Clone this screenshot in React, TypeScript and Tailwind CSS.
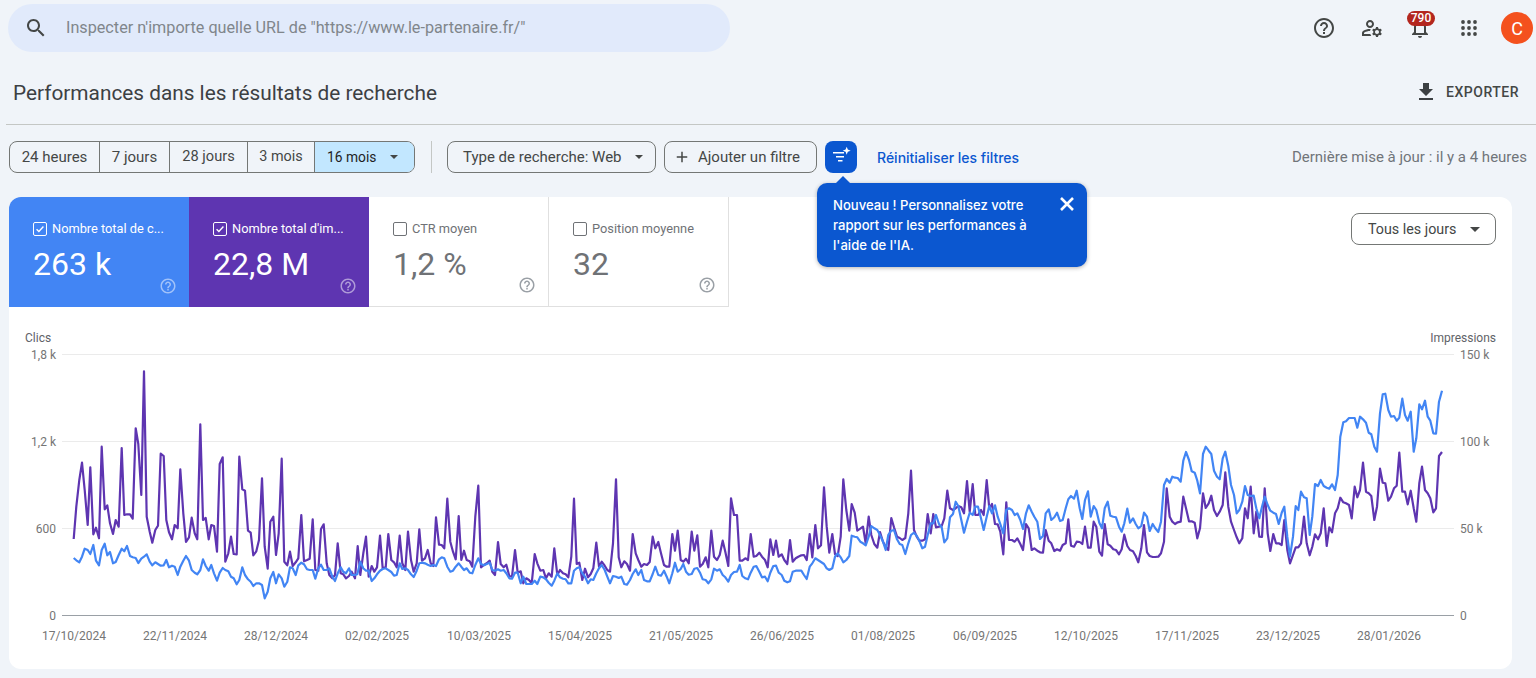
import React from "react";

// chart points read off the picture: [left of crop, top of crop, x, y, x, y...] in 3x crop pixels
const toPoints = (parts: number[][]) =>
  parts
    .map(([ox, oy, ...rest]) => {
      const out: string[] = [];
      for (let i = 0; i < rest.length; i += 2) {
        out.push(`${(ox + rest[i] / 3).toFixed(1)},${(oy + rest[i + 1] / 3).toFixed(1)}`);
      }
      return out.join(" ");
    })
    .join(" ");

const purple = toPoints([
  [0, 330, 221,627,229,530,238,450,246,398,254,480,263,585,271,412,280,613,288,593,297,625,305,350,314,538,322,526,330,580,339,612,347,570,356,590,365,354,373,555,381,553,390,553,398,566,407,295,415,342,424,495,432,124,440,560,449,605,457,638,466,600,474,587,482,371,491,378,499,570,507,607,516,628,524,585,533,595,541,418,550,550,558,636,567,622,575,563,584,610,592,628,601,283,609,570,617,564,626,628,634,585,642,588,651,665,659,402,668,382,676,695,685,670,693,620,701,672,710,673,718,380,727,478,735,482,744,602,752,608,760,676,769,664,777,630,786,445,794,650,803,716,811,575,820,560,828,675,836,610,845,386,853,695,862,706,870,665,878,708,887,697,895,685,904,555,912,694,921,690,929,686,938,568,946,720,955,722,963,597,971,583,980,700,988,735,997,745,1005,735,1013,640,1022,730,1030,733,1038,745,1047,738,1055,725,1065,745,1073,648,1081,735,1090,670,1098,620,1106,740,1115,708,1123,725,1131,712,1140,617,1148,715,1157,712,1165,612,1174,690,1182,697,1190,712,1199,617,1207,700,1216,720,1224,605,1233,690,1241,725,1250,700,1258,598],
  [400, 420, 66,422,75,415,83,390,92,430,100,438,108,292,117,374,125,375,133,385,142,236,151,365,159,395,167,418,176,288,184,420,192,392,200,420,209,424,217,440,226,290,235,197,243,442,252,435,260,430,269,422,277,455,285,465,294,366,302,432,311,442,319,434,328,468,336,470,345,390,353,458,362,454,370,490,379,475,387,480,395,490,404,402,412,430,421,452,430,450,438,475,446,460,455,470,463,385,472,465,480,450,489,460,497,463,505,472,514,410,522,236,530,432,538,428,547,480,555,446,564,472,572,462,580,445,589,368,597,440,605,425,614,437,622,450,630,455,639,370,648,178,656,412,664,442,673,424,681,432,690,452,698,342,707,400,715,420,724,440,732,432,741,435,749,426,758,350,766,385,775,366,783,400,792,435,800,440,808,440,817,342,825,392,833,332,842,420,850,425,858,416,866,430,875,335,883,392,892,346,900,440,908,432,917,412,925,442,934,332,942,410,951,420,959,405,968,362,976,395,985,438,993,235,1002,285,1011,285,1019,422,1027,422,1036,415,1044,420,1052,342,1061,410,1069,408,1078,398,1086,410,1095,420,1103,442,1111,358,1120,405,1128,362,1136,410,1145,403,1153,420,1162,432,1170,360,1178,425,1187,415,1195,410,1204,406,1212,405,1220,420,1229,342,1237,412,1246,315,1254,385],
  [800, 420, 63,376,72,202,80,320,88,398,97,342,105,402,113,408,122,350,130,178,139,270,148,332,155,252,164,278,172,332,181,326,189,320,197,370,206,290,214,345,223,372,232,383,240,336,249,365,257,380,265,390,274,294,282,322,291,350,299,354,307,360,316,354,325,280,333,152,342,330,350,350,358,362,367,362,375,358,383,282,392,340,400,282,408,322,417,320,425,318,433,295,442,212,450,265,459,270,467,265,475,258,484,262,492,280,501,183,509,275,518,192,526,285,534,285,543,270,551,285,560,180,568,265,576,252,585,312,593,313,601,335,610,403,619,247,627,360,636,360,644,365,652,355,661,372,669,390,678,312,686,325,695,390,703,385,712,392,720,397,729,398,737,330,746,362,754,370,763,393,771,388,780,392,788,375,797,370,805,298,813,377,822,380,830,365,839,366,847,372,855,320,864,383,872,383,881,305,889,320,898,395,906,407,914,312,923,373,931,377,940,388,948,390,957,403,965,388,973,344,982,378,990,390,999,394,1007,408,1015,427,1024,385,1032,315,1041,397,1049,408,1058,411,1066,411,1075,410,1083,400,1092,365,1100,205,1109,290],
  [1150, 330, 67,575,75,582,83,577,92,575,100,500,108,535,117,574,125,574,134,578,142,625,150,595,159,490,167,534,176,520,184,497,192,540,201,558,209,545,218,525,226,427,235,530,243,575,252,600,260,622,268,640,277,625,285,535,293,565,302,470,311,610,319,545,328,620,336,621,344,475,353,610,361,663,370,612,378,640,386,640,395,645,403,570,412,660,420,700,429,675,437,652,445,652,453,640,462,560,470,640,479,676,487,650,495,613,504,628,512,610,521,535,530,648,538,592,546,607,555,550,563,535,571,503,580,517,588,520,597,525,605,565,614,470,622,502,630,480,639,398,648,485,656,490,664,498,673,570,681,530,690,416,698,458,706,460,715,512,723,500,732,475,740,467,748,368,757,485,765,485,773,523,782,482,791,535,799,575,808,460,816,410,825,480,833,490,841,505,850,547,858,535,867,378,876,366],
]);

const blue = toPoints([
  [0, 330, 221,684,229,691,238,697,246,680,254,656,263,660,271,672,280,645,288,692,297,706,305,660,314,641,322,676,330,666,339,700,347,696,356,675,365,656,373,664,381,648,390,678,398,682,407,684,415,699,424,686,432,680,440,673,449,695,457,706,466,697,474,702,482,707,491,706,499,690,507,712,516,707,524,710,533,735,541,710,550,692,558,678,567,692,575,720,584,728,592,733,601,720,609,688,617,708,626,722,634,705,642,730,651,752,659,728,668,714,676,720,685,724,693,740,701,745,710,763,718,750,727,712,735,735,744,748,752,755,760,768,769,760,777,760,786,765,794,805,803,785,811,745,820,726,828,760,836,733,845,745,853,770,862,755,870,712,878,715,887,735,895,706,904,698,912,703,921,718,929,720,938,720,946,746,955,715,963,704,971,720,980,720,988,715,997,740,1005,753,1013,730,1022,712,1030,725,1038,730,1047,715,1055,735,1064,735,1072,733,1081,695,1090,715,1098,722,1106,722,1115,753,1123,745,1131,733,1140,722,1148,717,1157,715,1165,720,1174,726,1182,737,1190,735,1199,700,1207,717,1216,715,1224,720,1233,733,1241,741,1250,722,1258,700],
  [400, 420, 66,428,75,430,83,434,92,438,100,435,108,438,117,418,125,412,133,415,142,440,151,455,159,452,167,440,176,430,184,440,192,450,200,445,209,458,217,460,226,435,235,415,243,432,252,436,260,432,269,428,277,450,285,452,294,448,302,452,311,450,319,460,328,475,336,476,345,458,353,458,362,490,370,470,379,492,387,492,395,492,404,482,412,492,421,470,430,472,438,478,446,488,455,497,463,482,472,460,480,472,489,476,497,478,505,490,514,490,522,452,530,445,538,442,547,460,555,470,564,490,572,478,580,480,589,460,597,445,605,435,614,450,622,470,630,490,639,468,648,470,656,474,664,470,673,492,681,494,690,480,698,462,707,448,715,465,724,450,732,480,741,484,749,484,758,462,766,440,775,465,783,467,792,452,800,470,808,490,817,460,825,428,833,455,842,447,850,432,858,455,866,464,875,462,883,446,892,444,900,458,908,478,917,480,925,490,934,478,942,446,951,452,959,448,968,465,976,472,985,485,993,465,1002,456,1011,455,1019,435,1027,468,1036,475,1044,478,1052,458,1061,440,1069,438,1078,455,1086,472,1095,470,1103,484,1111,458,1120,438,1128,437,1136,458,1145,465,1153,482,1162,487,1170,484,1178,455,1187,452,1195,452,1204,452,1212,465,1220,477,1229,440,1237,430,1246,415,1254,420],
  [800, 420, 63,426,72,432,80,445,88,450,97,445,105,410,113,400,122,412,130,427,139,420,148,408,155,347,164,350,172,352,181,365,189,370,197,376,206,350,214,318,223,325,232,330,240,345,249,365,257,390,265,345,274,332,282,330,291,358,299,372,307,375,316,402,325,370,333,345,342,338,350,347,358,362,367,385,375,380,383,345,392,310,400,310,408,285,417,312,425,322,433,367,442,355,450,292,459,282,467,245,475,258,484,300,492,338,501,305,509,278,518,285,526,260,534,260,543,295,551,330,560,290,568,258,576,280,585,256,593,290,601,312,610,340,619,270,627,265,636,270,644,285,652,280,661,300,669,327,678,280,686,256,695,275,703,290,712,305,720,357,729,348,737,280,746,268,754,300,763,292,771,278,780,303,788,300,797,265,805,238,813,228,822,236,830,212,839,265,847,297,855,240,864,214,872,290,881,258,889,270,898,308,906,325,914,265,923,245,931,287,940,290,948,292,957,320,965,335,973,310,982,266,990,308,999,295,1007,312,1015,325,1024,318,1032,278,1041,290,1049,333,1058,312,1066,325,1075,336,1083,305,1092,195,1100,177,1109,188],
  [1150, 330, 67,440,75,443,83,444,92,455,100,392,108,366,117,390,125,424,134,428,142,452,150,490,159,372,167,350,176,362,184,372,192,422,201,440,209,448,218,385,226,365,235,408,243,465,252,495,260,550,268,540,277,515,285,468,293,495,302,498,311,497,319,535,328,565,336,530,344,500,353,525,361,542,370,548,378,552,386,582,395,548,403,530,412,620,420,680,429,620,437,528,445,540,453,485,462,502,470,505,479,615,487,560,495,462,504,468,512,450,521,468,530,473,538,476,546,463,555,480,563,435,571,320,580,277,588,274,597,264,605,264,614,264,622,293,630,260,639,268,648,278,656,308,664,313,673,350,681,365,690,250,698,193,706,191,715,240,723,260,732,258,740,272,748,263,757,206,765,255,773,272,782,245,791,365,799,325,808,223,816,238,825,212,833,260,841,272,850,310,858,311,867,215,876,182],
]);

const dates = [
  ["17/10/2024", 74], ["22/11/2024", 175], ["28/12/2024", 276], ["02/02/2025", 377], ["10/03/2025", 479],
  ["15/04/2025", 580], ["21/05/2025", 681], ["26/06/2025", 782], ["01/08/2025", 883], ["06/09/2025", 985],
  ["12/10/2025", 1086], ["17/11/2025", 1187], ["23/12/2025", 1288], ["28/01/2026", 1389],
] as const;

const rows = [
  { y: 354.5, left: "1,8 k", right: "150 k" },
  { y: 441.5, left: "1,2 k", right: "100 k" },
  { y: 528.5, left: "600", right: "50 k" },
  { y: 615.5, left: "0", right: "0" },
];

const Mi = ({ d, className }: { d: string; className?: string }) => (
  <svg viewBox="0 0 24 24" className={className} fill="currentColor">
    <path d={d} />
  </svg>
);

const helpPath =
  "M11 18h2v-2h-2v2zm1-16C6.48 2 2 6.48 2 12s4.48 10 10 10 10-4.48 10-10S17.52 2 12 2zm0 18c-4.41 0-8-3.59-8-8s3.59-8 8-8 8 3.59 8 8-3.59 8-8 8zm0-14c-2.21 0-4 1.79-4 4h2c0-1.1.9-2 2-2s2 .9 2 2c0 2-3 1.75-3 5h2c0-2.25 3-2.5 3-5 0-2.21-1.79-4-4-4z";

const Caret = ({ className = "" }: { className?: string }) => (
  <span className={`w-0 h-0 border-x-[4px] border-x-transparent border-t-[4px] border-t-[#444746] ${className}`} />
);

const Metric = ({ label, value, on, bg }: { label: string; value: string; on?: boolean; bg?: string }) => (
  <div
    className={`relative w-[180px] h-[110px] pl-[24px] pt-[24px] ${
      on ? `${bg} text-white` : "bg-white text-[#6f7276] border-r border-b border-[#e0e0e0]"
    }`}
  >
    <div className="flex items-center gap-[5px] text-[12.8px] leading-[16px] whitespace-nowrap">
      <span
        className={`w-[14px] h-[14px] rounded-[2px] border flex items-center justify-center ${
          on ? "border-white" : "border-[#6f7276]"
        }`}
      >
        {on && (
          <svg viewBox="0 0 14 14" className="w-[12px] h-[12px]" fill="none" stroke="currentColor" strokeWidth="1.6">
            <path d="M3 7.2l2.7 2.7L11 4" />
          </svg>
        )}
      </span>
      {label}
    </div>
    <div className="mt-[7px] text-[32px] leading-[40px]">{value}</div>
    <Mi
      d={helpPath}
      className={`absolute bottom-[12px] w-[18px] h-[18px] ${on ? "right-[12px] text-white/50" : "right-[12px] text-[#9aa0a6]"}`}
    />
  </div>
);

const Segment = ({ children, className = "" }: { children: React.ReactNode; className?: string }) => (
  <div className={`h-full flex items-center justify-center ${className}`}>{children}</div>
);

export default function App() {
  return (
    <div className="relative h-[678px] overflow-hidden bg-[#f0f4f9] text-[#1f1f1f] font-['Roboto',sans-serif]">
      {/* top bar */}
      <div className="flex items-center justify-between h-[48px] mt-[4px] pl-[8px] pr-[3px]">
        <div className="w-[722px] h-[48px] rounded-[24px] bg-[#e1eafb] flex items-center pl-[16px]">
          <Mi
            d="M15.5 14h-.79l-.28-.27C15.41 12.59 16 11.11 16 9.5 16 5.91 13.09 3 9.5 3S3 5.91 3 9.5 5.91 16 9.5 16c1.61 0 3.09-.59 4.23-1.57l.27.28v.79l5 4.99L20.49 19l-4.99-5zm-6 0C7.01 14 5 11.99 5 9.5S7.01 5 9.5 5 14 7.01 14 9.5 11.99 14 9.5 14z"
            className="w-[24px] h-[24px] text-[#444746]"
          />
          <span className="ml-[18px] pt-px text-[16.2px] text-[#80868b]">Inspecter n'importe quelle URL de "https://www.le-partenaire.fr/"</span>
        </div>
        <div className="flex items-center">
          <Mi d={helpPath} className="w-[24px] h-[24px] text-[#444746]" />
          <Mi
            d="M4 18v-.65c0-.34.16-.66.41-.81C6.1 15.53 8.03 15 10 15c.03 0 .05 0 .08.01.1-.7.3-1.37.59-1.98-.22-.02-.44-.03-.67-.03-2.42 0-4.68.67-6.61 1.82-.88.52-1.39 1.5-1.39 2.53V20h9.26c-.42-.6-.75-1.28-.97-2H4zM10 12c2.21 0 4-1.79 4-4s-1.79-4-4-4-4 1.79-4 4 1.79 4 4 4zm0-6c1.1 0 2 .9 2 2s-.9 2-2 2-2-.9-2-2 .9-2 2-2zM20.75 16c0-.22-.03-.42-.06-.63l1.14-1.01-1-1.73-1.45.49c-.32-.27-.68-.48-1.08-.63L18 11h-2l-.3 1.49c-.4.15-.76.36-1.08.63l-1.45-.49-1 1.73 1.14 1.01c-.03.21-.06.41-.06.63s.03.42.06.63l-1.14 1.01 1 1.73 1.45-.49c.32.27.68.48 1.08.63L16 21h2l.3-1.49c.4-.15.76-.36 1.08-.63l1.45.49 1-1.73-1.14-1.01c.03-.21.06-.41.06-.63zM17 18c-1.1 0-2-.9-2-2s.9-2 2-2 2 .9 2 2-.9 2-2 2z"
            className="ml-[24px] w-[24px] h-[24px] text-[#444746]"
          />
          <div className="relative ml-[24px] w-[24px] h-[24px]">
            <Mi
              d="M12 22c1.1 0 2-.9 2-2h-4c0 1.1.9 2 2 2zm6-6v-5c0-3.07-1.63-5.64-4.5-6.32V4c0-.83-.67-1.5-1.5-1.5s-1.5.67-1.5 1.5v.68C7.64 5.36 6 7.92 6 11v5l-2 2v1h16v-1l-2-2zm-2 1H8v-6c0-2.48 1.51-4.5 4-4.5s4 2.02 4 4.5v6z"
              className="w-[24px] h-[24px] text-[#444746]"
            />
            <span className="absolute left-[-1px] top-[-5px] w-[28px] h-[15px] rounded-[8px] bg-[#b3261e] text-white text-[12px] font-medium leading-[15px] text-center">790</span>
          </div>
          <svg viewBox="0 0 24 24" className="ml-[25px] w-[24px] h-[24px] text-[#444746]" fill="currentColor">
            {[6, 12, 18].flatMap((y) => [6, 12, 18].map((x) => <circle key={`${x}-${y}`} cx={x} cy={y} r="1.9" />))}
          </svg>
          <div className="ml-[20px] w-[32px] h-[32px] rounded-full bg-[#f4511e] text-white text-[18px] flex items-center justify-center">C</div>
        </div>
      </div>

      {/* title */}
      <div className="flex items-center justify-between h-[72px] pt-[10px] pl-[13px] pr-[17px]">
        <h1 className="pt-[2px] text-[20.8px] text-[#3c4043] font-normal">Performances dans les résultats de recherche</h1>
        <div className="flex items-center gap-[8px] mb-[2px] text-[14px] font-medium tracking-[0.5px] text-[#444746]">
          <Mi d="M19 9h-4V3H9v6H5l7 7 7-7zM5 18v2h14v-2H5z" className="w-[24px] h-[24px] text-[#3c4043]" />
          EXPORTER
        </div>
      </div>
      <div className="ml-[6px] border-t border-[#c4c7c5]" />

      {/* filters */}
      <div className="flex items-center h-[32px] mt-[16px] pl-[9px] pr-[9px] text-[15px] text-[#444746]">
        <div className="flex items-center h-[32px] rounded-[8px] border border-[#747775] overflow-hidden">
          <Segment className="w-[90px] border-r border-[#747775]">24 heures</Segment>
          <Segment className="w-[70px] border-r border-[#747775]">7 jours</Segment>
          <Segment className="w-[78px] border-r border-[#747775] text-[14.6px]">28 jours</Segment>
          <Segment className="w-[67px] border-r border-[#747775] text-[14.4px]">3 mois</Segment>
          <Segment className="w-[99px] bg-[#c2e7ff] text-[#1f1f1f] text-[13.8px] !justify-start pl-[12px]">
            16 mois
            <Caret className="ml-[14px] border-t-[#1f1f1f]" />
          </Segment>
        </div>
        <div className="w-px h-[32px] bg-[#c4c7c5] ml-[16px]" />
        <div className="ml-[15px] h-[32px] w-[209px] rounded-[8px] border border-[#747775] flex items-center pl-[15px]">
          Type de recherche: Web
          <Caret className="ml-[13px]" />
        </div>
        <div className="ml-[8px] h-[32px] w-[153px] rounded-[8px] border border-[#747775] flex items-center pl-[8px]">
          <svg viewBox="0 0 24 24" className="w-[18px] h-[18px]" fill="currentColor">
            <path d="M19 13h-6v6h-2v-6H5v-2h6V5h2v6h6v2z" />
          </svg>
          <span className="ml-[7px]">Ajouter un filtre</span>
        </div>
        <div className="ml-[8px] w-[32px] h-[32px] rounded-[8px] bg-[#0b57d0]">
          <svg viewBox="0 0 32 32" className="w-[32px] h-[32px] text-white" fill="currentColor">
            <path d="M8 11h11v1.5H8zM11 15h8v1.5h-8zM13 19h4.5v1.5H13z" />
            <path d="M21.7 5.7l1.1 2.9 2.9 1.1-2.9 1.1-1.1 2.9-1.1-2.9-2.9-1.1 2.9-1.1z" />
          </svg>
        </div>
        <span className="ml-[20px] text-[#0b57d0] font-['Inter',sans-serif] font-medium text-[14px]">Réinitialiser les filtres</span>
        <span className="ml-auto text-[#70757a]">Dernière mise à jour : il y a 4 heures</span>
      </div>

      {/* card */}
      <div className="ml-[9px] mr-[24px] mt-[24px] h-[472px] bg-white rounded-[12px] overflow-hidden relative">
        <div className="flex">
          <Metric on bg="bg-[#4285f4]" label="Nombre total de c..." value="263 k" />
          <Metric on bg="bg-[#5e35b1]" label="Nombre total d'im..." value="22,8 M" />
          <Metric label="CTR moyen" value="1,2 %" />
          <Metric label="Position moyenne" value="32" />
        </div>
        <div className="absolute right-[16px] top-[16px] w-[145px] h-[32px] rounded-[8px] border border-[#747775] flex items-center pl-[16px] pt-px text-[14.3px] text-[#444746]">
          Tous les jours
          <Caret className="ml-[14px] border-x-[5px] border-t-[5px]" />
        </div>
        <svg viewBox="9 307 1503 362" className="block w-[1503px] h-[362px] font-['Roboto',sans-serif]">
          <text x="25" y="342" fontSize="12" fill="#5f6368">Clics</text>
          <text x="1496" y="342" fontSize="12" fill="#5f6368" textAnchor="end">Impressions</text>
          {rows.map((r) => (
            <g key={r.y}>
              <line x1="62" x2="1454" y1={r.y} y2={r.y} stroke={r.left === "0" ? "#9aa0a6" : "#ebebeb"} />
              <text x="56" y={r.y + 4} fontSize="12" fill="#757575" textAnchor="end">{r.left}</text>
              <text x="1460" y={r.y + 4} fontSize="12" fill="#757575">{r.right}</text>
            </g>
          ))}
          {dates.map(([label, x]) => (
            <text key={label} x={x} y="640" fontSize="12" fill="#757575" textAnchor="middle">{label}</text>
          ))}
          <polyline points={purple} fill="none" stroke="#5e35b1" strokeWidth="2.2" strokeLinejoin="round" />
          <polyline points={blue} fill="none" stroke="#4285f4" strokeWidth="2.2" strokeLinejoin="round" />
        </svg>
      </div>

      {/* tooltip */}
      <div className="absolute left-[817px] top-[183px] w-[270px] h-[84px] rounded-[10px] bg-[#0b57d0] shadow-[0_1px_4px_rgba(0,0,0,0.3)] text-white text-[13.1px] font-medium leading-[20px] font-['Inter',sans-serif] pl-[16px] pt-[12px]">
        <span className="absolute left-[19px] top-[-7px] w-0 h-0 border-x-[7px] border-x-transparent border-b-[7px] border-b-[#0b57d0]" />
        <p className="w-[222px]">Nouveau ! Personnalisez votre rapport sur les performances à l'aide de l'IA.</p>
        <svg viewBox="0 0 24 24" className="absolute right-[8px] top-[9px] w-[24px] h-[24px]" fill="none" stroke="currentColor" strokeWidth="2.6">
          <path d="M6 6l12 12M18 6L6 18" />
        </svg>
      </div>
    </div>
  );
}
